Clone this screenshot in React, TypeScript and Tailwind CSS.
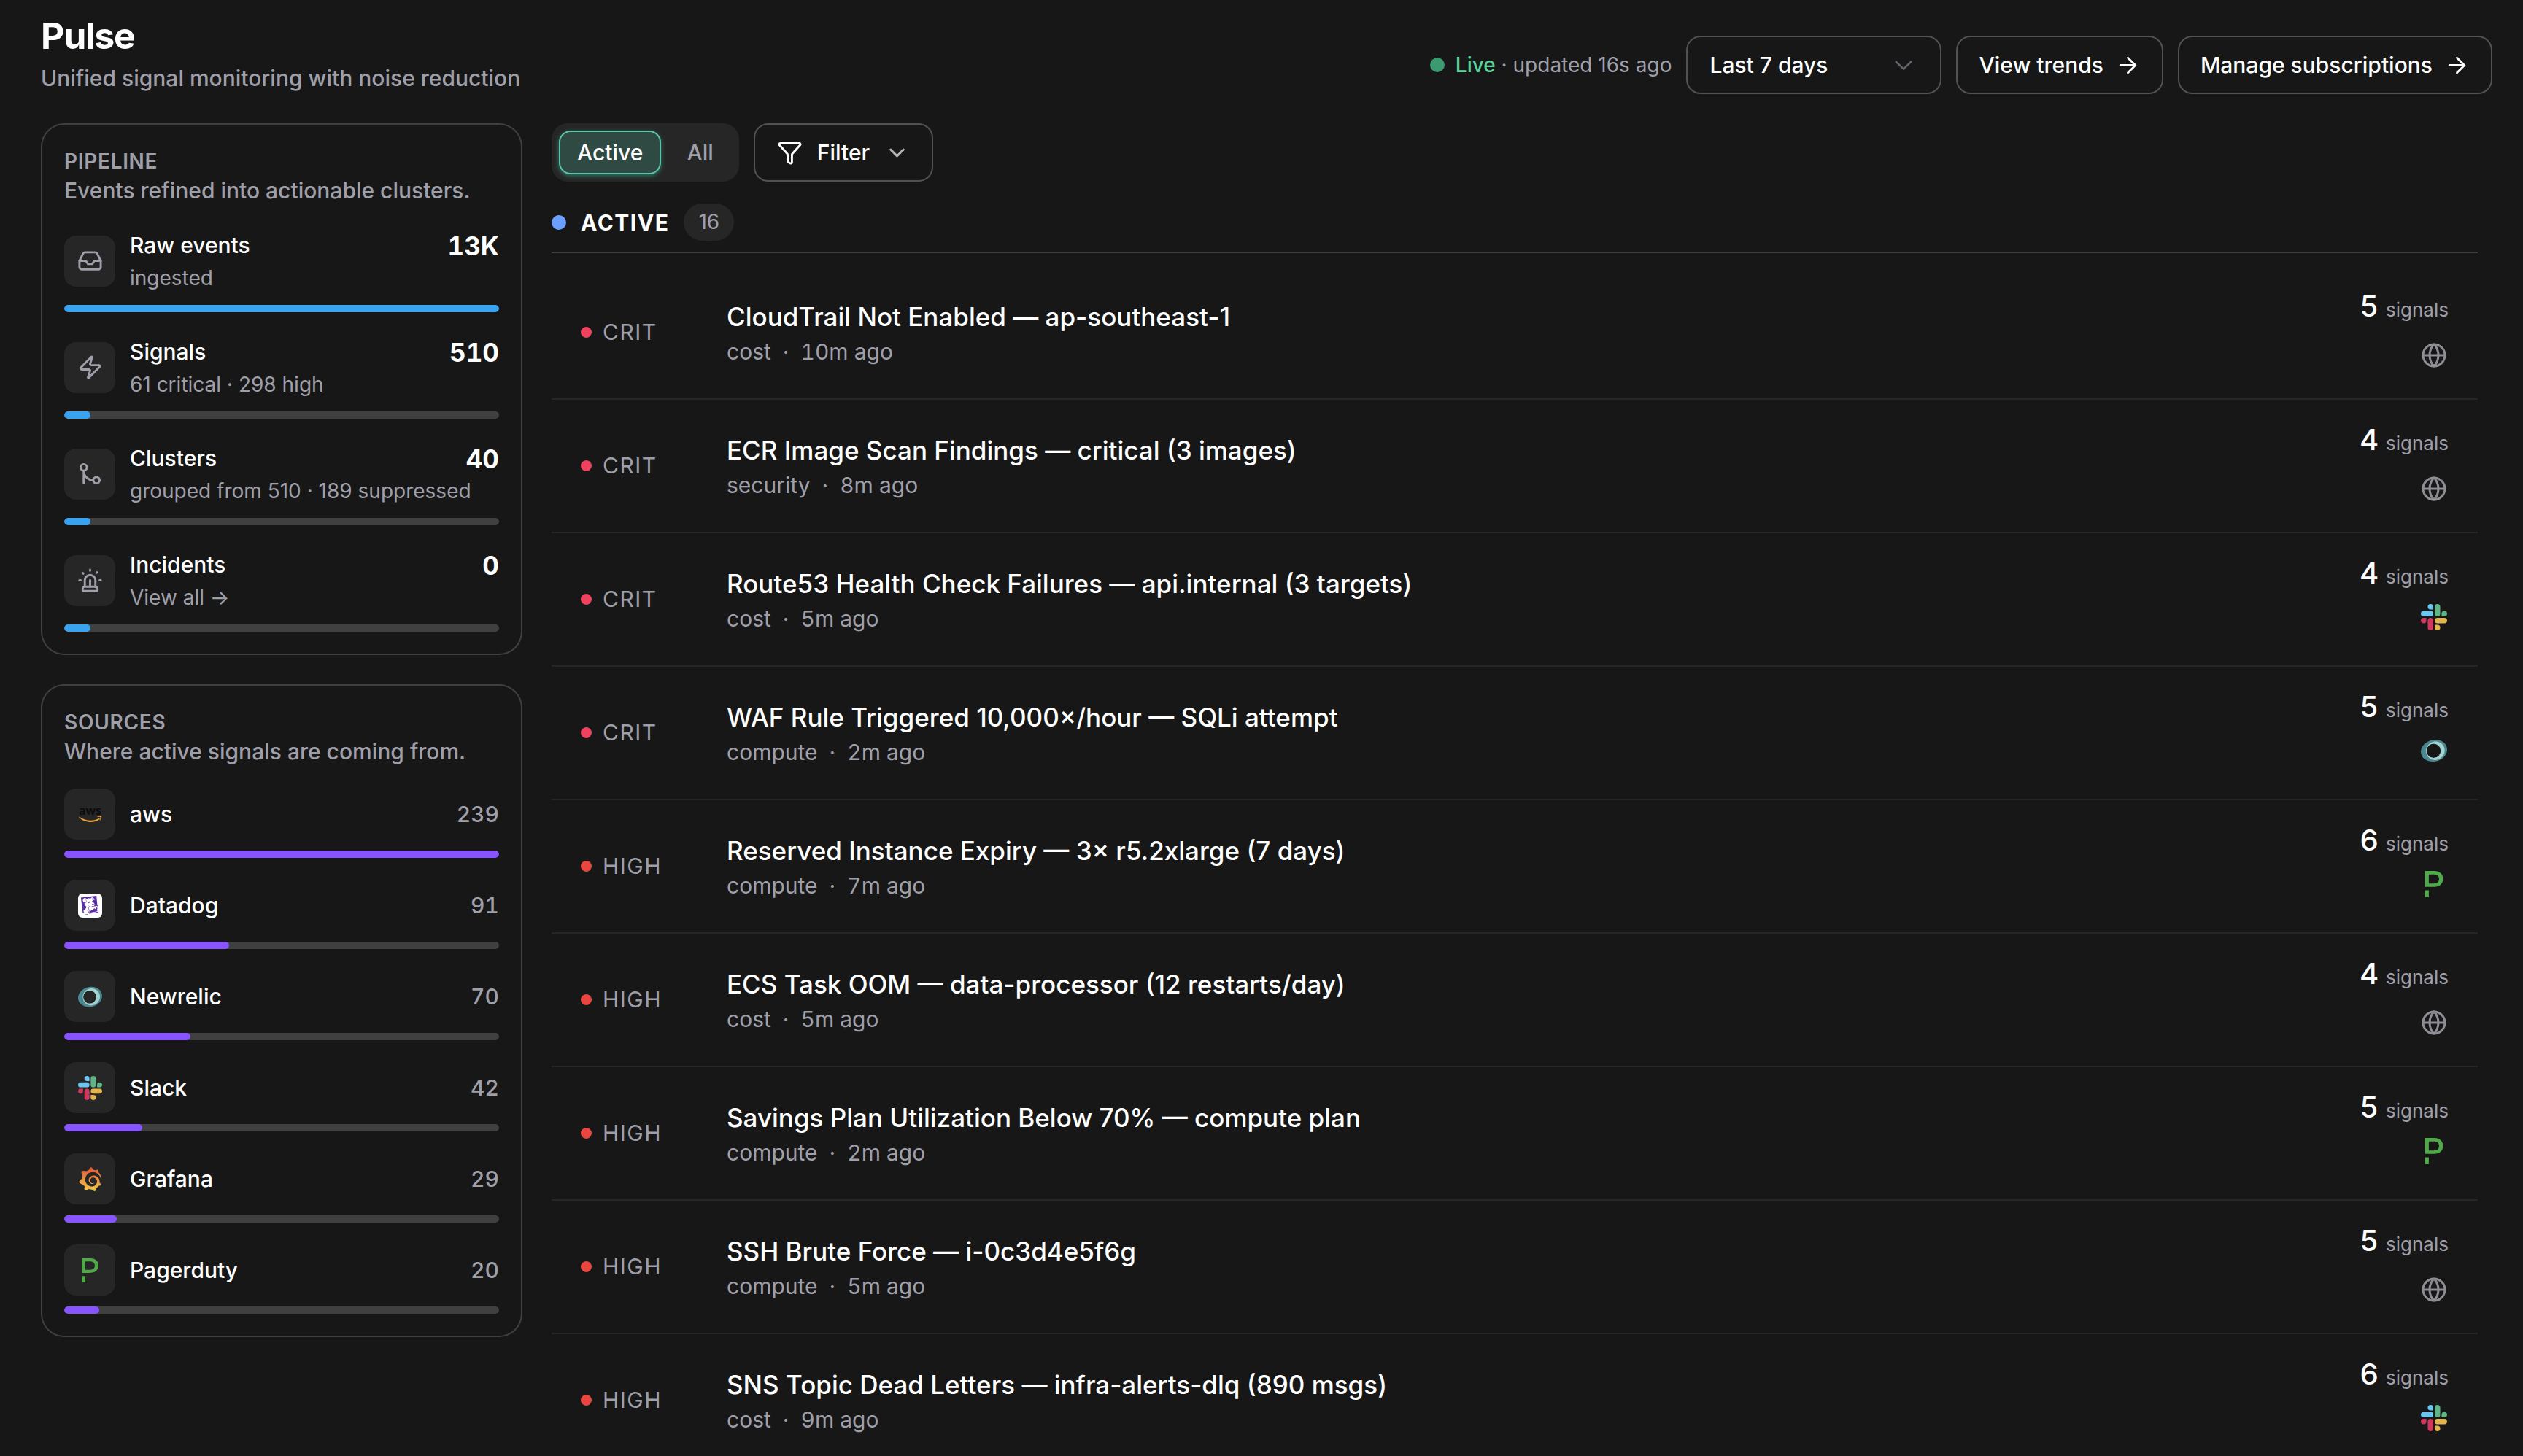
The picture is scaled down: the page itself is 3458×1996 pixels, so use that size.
import { useState } from "react";
import type { ReactNode } from "react";
import { ArrowRight, ChevronDown, Funnel, GitMerge, Globe, Inbox, Siren, Zap } from "lucide-react";
import { SiDatadog, SiGrafana, SiPagerduty } from "react-icons/si";

type SourceName = "aws" | "datadog" | "newrelic" | "slack" | "grafana" | "pagerduty" | "web";

const pipeline = [
  { icon: Inbox, label: "Raw events", detail: "ingested", value: "13K", percent: 100 },
  { icon: Zap, label: "Signals", detail: "61 critical · 298 high", value: "510", percent: 6 },
  { icon: GitMerge, label: "Clusters", detail: "grouped from 510 · 189 suppressed", value: "40", percent: 6 },
  { icon: Siren, label: "Incidents", detail: "View all →", href: "#incidents", value: "0", percent: 6 },
];

const sources: { id: SourceName; label: string; count: number }[] = [
  { id: "aws", label: "aws", count: 239 },
  { id: "datadog", label: "Datadog", count: 91 },
  { id: "newrelic", label: "Newrelic", count: 70 },
  { id: "slack", label: "Slack", count: 42 },
  { id: "grafana", label: "Grafana", count: 29 },
  { id: "pagerduty", label: "Pagerduty", count: 20 },
];

const clusters: {
  severity: "CRIT" | "HIGH";
  title: string;
  category: string;
  age: string;
  signals: number;
  source: SourceName;
}[] = [
  { severity: "CRIT", title: "CloudTrail Not Enabled — ap-southeast-1", category: "cost", age: "10m ago", signals: 5, source: "web" },
  { severity: "CRIT", title: "ECR Image Scan Findings — critical (3 images)", category: "security", age: "8m ago", signals: 4, source: "web" },
  { severity: "CRIT", title: "Route53 Health Check Failures — api.internal (3 targets)", category: "cost", age: "5m ago", signals: 4, source: "slack" },
  { severity: "CRIT", title: "WAF Rule Triggered 10,000×/hour — SQLi attempt", category: "compute", age: "2m ago", signals: 5, source: "newrelic" },
  { severity: "HIGH", title: "Reserved Instance Expiry — 3× r5.2xlarge (7 days)", category: "compute", age: "7m ago", signals: 6, source: "pagerduty" },
  { severity: "HIGH", title: "ECS Task OOM — data-processor (12 restarts/day)", category: "cost", age: "5m ago", signals: 4, source: "web" },
  { severity: "HIGH", title: "Savings Plan Utilization Below 70% — compute plan", category: "compute", age: "2m ago", signals: 5, source: "pagerduty" },
  { severity: "HIGH", title: "SSH Brute Force — i-0c3d4e5f6g", category: "compute", age: "5m ago", signals: 5, source: "web" },
  { severity: "HIGH", title: "SNS Topic Dead Letters — infra-alerts-dlq (890 msgs)", category: "cost", age: "9m ago", signals: 6, source: "slack" },
];

function AwsLogo() {
  return (
    <svg viewBox="0 0 36 36" className="size-full overflow-visible" aria-hidden="true">
      <text x="18" y="19" textAnchor="middle" fontFamily="Open Sans, sans-serif" fontSize="18" fontWeight="600" fill="#0a0a0a">
        aws
      </text>
      <path d="M2 21.5c9 6.600 21 7.300 29.500 2.300.8-.5 1.600.5.800 1.200C24.500 31.500 10 31 1.500 22.300c-.4-.5 0-1.100.5-.8z" fill="#f0a13c" />
      <path d="M29 21.200c2-1.300 5.500-1.200 6-.5.500.8-.2 4.300-2 6-.5.4-.8.200-.6-.4.500-1.200 1.300-3.600.9-4.300-.4-.5-2.600-.4-4-.2-.6 0-.7-.3-.3-.6z" fill="#f0a13c" />
    </svg>
  );
}

function DatadogLogo() {
  return (
    <span className="flex size-full items-center justify-center rounded-md bg-white">
      <SiDatadog className="size-[26px] text-[#5b32a3]" aria-hidden="true" />
    </span>
  );
}

function NewRelicLogo() {
  return (
    <svg viewBox="0 0 36 36" className="size-full" aria-hidden="true">
      <path
        fillRule="evenodd"
        d="M19 3C28 2.500 36 8 36 16.500S28 32.500 17.500 33C7 33.300 0 27.500 0 19.500S8.500 3.500 19 3zm-1.500 5.500a9.800 9.800 0 1 0 0 19.600 9.800 9.800 0 0 0 0-19.600z"
        fill="#4a8790"
      />
      <path
        fillRule="evenodd"
        d="M20 5.500c7.500 0 12.700 5.500 12.700 12.300S27 31 19.500 31C13 31 7 25.500 7 18.500S13 5.500 20 5.500zm-2.500 3a9.800 9.800 0 1 0 0 19.600 9.800 9.800 0 0 0 0-19.600z"
        fill="#a5d3cf"
      />
    </svg>
  );
}

function SlackLogo() {
  return (
    <svg viewBox="0 0 24 24" className="size-full" aria-hidden="true">
      <path
        fill="#6bc5ee"
        d="M8.834 5.042a2.528 2.528 0 0 1-2.521-2.520A2.528 2.528 0 0 1 8.834 0a2.528 2.528 0 0 1 2.521 2.522v2.520H8.834zM8.834 6.313a2.528 2.528 0 0 1 2.521 2.521 2.528 2.528 0 0 1-2.521 2.521H2.522A2.528 2.528 0 0 1 0 8.834a2.528 2.528 0 0 1 2.522-2.521h6.312z"
      />
      <path
        fill="#5fb585"
        d="M18.956 8.834a2.528 2.528 0 0 1 2.522-2.521A2.528 2.528 0 0 1 24 8.834a2.528 2.528 0 0 1-2.522 2.521h-2.522V8.834zM17.688 8.834a2.528 2.528 0 0 1-2.523 2.521 2.527 2.527 0 0 1-2.520-2.521V2.522A2.527 2.527 0 0 1 15.165 0a2.528 2.528 0 0 1 2.523 2.522v6.312z"
      />
      <path
        fill="#e3b54d"
        d="M15.165 18.956a2.528 2.528 0 0 1 2.523 2.522A2.528 2.528 0 0 1 15.165 24a2.527 2.527 0 0 1-2.520-2.522v-2.522h2.520zM15.165 17.688a2.527 2.527 0 0 1-2.520-2.523 2.526 2.526 0 0 1 2.520-2.520h6.313A2.527 2.527 0 0 1 24 15.165a2.528 2.528 0 0 1-2.522 2.523h-6.313z"
      />
      <path
        fill="#cf375f"
        d="M5.042 15.165a2.528 2.528 0 0 1-2.520 2.523A2.528 2.528 0 0 1 0 15.165a2.527 2.527 0 0 1 2.522-2.520h2.520v2.520zM6.313 15.165a2.527 2.527 0 0 1 2.521-2.520 2.527 2.527 0 0 1 2.521 2.520v6.313A2.528 2.528 0 0 1 8.834 24a2.528 2.528 0 0 1-2.521-2.522v-6.313z"
      />
    </svg>
  );
}

function GrafanaLogo() {
  return (
    <>
      <svg className="absolute size-0" aria-hidden="true">
        <linearGradient id="grafana-fill" x1="0" y1="0" x2="0" y2="1">
          <stop offset="0" stopColor="#e0573a" />
          <stop offset="1" stopColor="#f2c84b" />
        </linearGradient>
      </svg>
      <SiGrafana className="size-full" fill="url(#grafana-fill)" aria-hidden="true" />
    </>
  );
}

function SourceLogo({ name }: { name: SourceName }) {
  switch (name) {
    case "aws":
      return <AwsLogo />;
    case "datadog":
      return <DatadogLogo />;
    case "newrelic":
      return <NewRelicLogo />;
    case "slack":
      return <SlackLogo />;
    case "grafana":
      return <GrafanaLogo />;
    case "pagerduty":
      return <SiPagerduty className="size-full text-[#4faa48]" aria-hidden="true" />;
    default:
      return <Globe className="mt-[7px] size-full text-[#8e8e95]" aria-hidden="true" />;
  }
}

function Panel({ title, subtitle, children }: { title: string; subtitle: string; children: ReactNode }) {
  return (
    <section className="rounded-[32px] p-8 inset-ring-2 inset-ring-[#404040]">
      <h2 className="text-[28px] leading-10 font-semibold tracking-wide text-[#9f9fa9]">{title}</h2>
      <p className="text-[30px] leading-[41px] font-medium text-[#9f9fa9]">{subtitle}</p>
      <ul className="mt-[30px] flex flex-col gap-[30px]">{children}</ul>
    </section>
  );
}

function IconTile({ children }: { children: ReactNode }) {
  return (
    <span className="flex size-[70px] shrink-0 items-center justify-center rounded-2xl bg-[#262626] text-[#9f9fa9]">
      {children}
    </span>
  );
}

function Bar({ percent, color }: { percent: number; color: string }) {
  return (
    <div className="mt-[15px] h-[10px] overflow-hidden rounded-full bg-[#404040]">
      <div className={`h-full rounded-full ${color}`} style={{ width: `${percent}%` }} />
    </div>
  );
}

function Header() {
  return (
    <header className="flex items-end justify-between pt-5 pr-[42px] pb-10 pl-14">
      <div>
        <h1 className="text-[50px] leading-[58px] font-bold tracking-tight">Pulse</h1>
        <p className="mt-2 text-[30px] leading-[43px] font-medium text-[#9f9fa9]">Unified signal monitoring with noise reduction</p>
      </div>
      <div className="flex items-center gap-5">
        <p className="flex items-center gap-[15px] text-[28px] text-[#9f9fa9]">
          <span className="size-5 rounded-full bg-[#3b9a70]" />
          <span>
            <span className="font-medium text-[#5bd19c]">Live</span> · updated 16s ago
          </span>
        </p>
        <div className="relative">
          <select
            aria-label="Time range"
            className="h-20 w-[350px] appearance-none rounded-[20px] border-2 border-[#525252] bg-transparent px-[30px] text-[30px] font-medium"
          >
            <option>Last 7 days</option>
            <option>Last 30 days</option>
          </select>
          <svg viewBox="0 0 24 13" className="pointer-events-none absolute top-[34px] right-10 h-[13px] w-6" fill="none" aria-hidden="true">
            <path d="M1 1l11 10.500L23 1" stroke="#63636b" strokeWidth="2.500" />
          </svg>
        </div>
        <a href="#trends" className="flex h-20 items-center gap-4 rounded-[20px] border-2 border-[#525252] px-[29px] text-[30px] font-medium">
          View trends
          <ArrowRight className="size-[35px]" aria-hidden="true" />
        </a>
        <a href="#subscriptions" className="flex h-20 items-center gap-4 rounded-[20px] border-2 border-[#525252] px-[29px] text-[30px] font-medium">
          Manage subscriptions
          <ArrowRight className="size-[35px]" aria-hidden="true" />
        </a>
      </div>
    </header>
  );
}

function Sidebar() {
  const max = sources[0].count;

  return (
    <aside className="flex w-[660px] shrink-0 flex-col gap-10">
      <Panel title="PIPELINE" subtitle="Events refined into actionable clusters.">
        {pipeline.map((stage) => (
          <li key={stage.label}>
            <div className="flex items-center gap-5">
              <IconTile>
                <stage.icon className="size-[35px]" aria-hidden="true" />
              </IconTile>
              <div className="flex-1">
                <div className="flex h-12 items-start justify-between">
                  <span className="text-[30px] leading-[48px] font-medium">{stage.label}</span>
                  <span className="text-[35px] leading-[50px] font-bold tabular-nums">{stage.value}</span>
                </div>
                {stage.href ? (
                  <a href={stage.href} className="block text-[28px] leading-[43px] text-[#9f9fa9]">
                    {stage.detail}
                  </a>
                ) : (
                  <p className="text-[28px] leading-[43px] text-[#9f9fa9]">{stage.detail}</p>
                )}
              </div>
            </div>
            <Bar percent={stage.percent} color="bg-[#3aa3f0]" />
          </li>
        ))}
      </Panel>

      <Panel title="SOURCES" subtitle="Where active signals are coming from.">
        {sources.map((source) => (
          <li key={source.id}>
            <div className="flex items-center gap-5">
              <IconTile>
                <span className="size-[33px]">
                  <SourceLogo name={source.id} />
                </span>
              </IconTile>
              <span className="flex-1 text-[30px] font-medium">{source.label}</span>
              <span className="text-[30px] font-medium text-[#9f9fa9] tabular-nums">{source.count}</span>
            </div>
            <Bar percent={Math.round((source.count / max) * 100)} color="bg-[#8754ff]" />
          </li>
        ))}
      </Panel>
    </aside>
  );
}

function Toolbar() {
  const [tab, setTab] = useState("Active");

  return (
    <div className="flex gap-5">
      <div className="flex h-20 items-center gap-[10px] rounded-[22px] bg-[#262626] p-[10px]">
        {["Active", "All"].map((name) => (
          <button
            key={name}
            type="button"
            onClick={() => setTab(name)}
            className={
              tab === name
                ? "h-[60px] rounded-2xl border-2 border-[#5cc4ab] bg-[#2f4a43] px-[23px] text-[30px] font-medium shadow-[0_2px_6px_#2f7a68]"
                : "h-[60px] rounded-2xl border-2 border-transparent px-[23px] text-[30px] font-medium text-[#9f9fa9]"
            }
          >
            {name}
          </button>
        ))}
      </div>
      <button type="button" className="flex h-20 items-center rounded-[20px] border-2 border-[#525252] px-[30px] text-[30px] font-medium">
        <Funnel className="mr-5 size-[35px]" aria-hidden="true" />
        Filter
        <ChevronDown className="ml-5 size-[35px] text-[#b4b4b8]" aria-hidden="true" />
      </button>
    </div>
  );
}

function ClusterList() {
  return (
    <section className="mt-[30px]">
      <div className="flex items-center border-b-2 border-[#404040] pb-[15px]">
        <span className="size-5 rounded-full bg-[#6ba0ff]" />
        <h2 className="ml-5 text-[30px] leading-10 font-bold tracking-wider">ACTIVE</h2>
        <span className="ml-5 rounded-full bg-[#262626] px-5 text-[28px] leading-[51px] text-[#9f9fa9]">16</span>
      </div>
      <ul className="pt-[18px]">
        {clusters.map((cluster) => (
          <li key={cluster.title} className="flex h-[183px] items-center border-b-2 border-[#262626] px-10">
            <div className="flex w-[200px] shrink-0 items-center gap-[15px]">
              <span className={`size-[15px] rounded-full ${cluster.severity === "CRIT" ? "bg-[#ee425e]" : "bg-[#ea4640]"}`} />
              <span className="text-[30px] tracking-wider text-[#9f9fa9]">{cluster.severity}</span>
            </div>
            <div className="min-w-0 flex-1">
              <h3 className="truncate text-[35px] leading-[54px] font-medium">{cluster.title}</h3>
              <p className="flex gap-4 text-[30px] leading-[43px] text-[#9f9fa9] tabular-nums">
                <span>{cluster.category}</span>
                <span>·</span>
                <span>{cluster.age}</span>
              </p>
            </div>
            <div className="flex flex-col items-end">
              <p className="flex items-baseline gap-[10px] leading-10">
                <span className="text-[40px] font-medium tabular-nums">{cluster.signals}</span>
                <span className="text-[26px] text-[#9f9fa9]">signals</span>
              </p>
              <div className="mt-[17px] h-[50px] pr-0.5">
                <div className="size-9">
                  <SourceLogo name={cluster.source} />
                </div>
              </div>
            </div>
          </li>
        ))}
      </ul>
    </section>
  );
}

export default function App() {
  return (
    <div className="h-screen overflow-hidden bg-[#171717] font-[Inter,sans-serif] text-white">
      <Header />
      <div className="flex gap-10 pr-[62px] pl-14">
        <Sidebar />
        <main className="min-w-0 flex-1">
          <Toolbar />
          <ClusterList />
        </main>
      </div>
    </div>
  );
}
